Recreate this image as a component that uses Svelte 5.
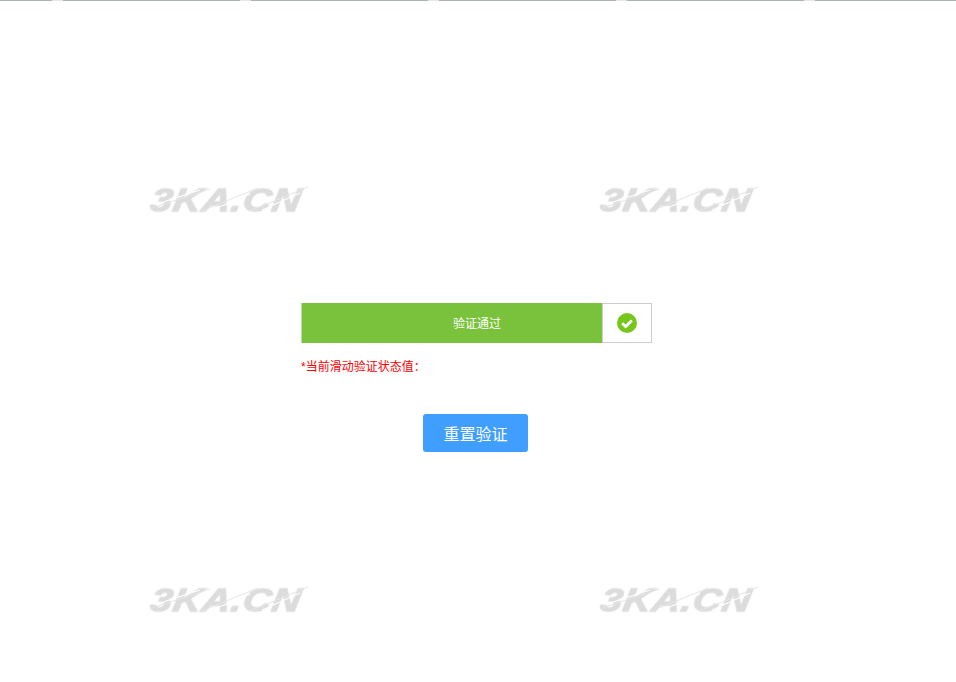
<script>
	const marks = [0, 1, 2, 3];
	const strips = [0, 1, 2, 3, 4, 5];
</script>

<div class="page">
	<div class="strip">
		{#each strips as s (s)}
			<span class="seg"></span>
		{/each}
	</div>

	<div class="marks" aria-hidden="true">
		{#each marks as m (m)}
			<div class="mark">
				<span class="mark-text">3KA.CN</span>
				<svg class="slashes" width="160" height="26" viewBox="0 0 160 26">
					<path d="M2 22 L60 3 M52 25 L108 2 M100 25 L158 1" fill="none" stroke="#e6e6e6" stroke-width="1" />
					<path d="M4 19 L50 4 M60 25 L100 8 M112 24 L150 7" fill="none" stroke="#fff" stroke-width="1.2" />
				</svg>
			</div>
		{/each}
	</div>

	<main class="content">
		<div class="slider">
			<div class="track">验证通过</div>
			<div class="handle">
				<svg width="20" height="20" viewBox="0 0 20 20">
					<circle cx="10" cy="10" r="10" fill="#76c61d" />
					<path d="M5.2 10.2 L8.7 13.6 L14.8 7.4" fill="none" stroke="#fff" stroke-width="2.8" />
				</svg>
			</div>
		</div>
		<p class="status">*当前滑动验证状态值：</p>
		<button class="reset">重置验证</button>
	</main>
</div>

<style>
	:global(body) {
		margin: 0;
		background: #fff;
	}

	.page {
		position: relative;
		height: 682px;
		overflow: hidden;
		font-family: "Liberation Sans", "Noto Sans CJK SC", sans-serif;
	}

	.strip {
		display: flex;
		gap: 11px;
		height: 1px;
		margin-left: -125px;
		background: #e6e6e6;
	}

	.seg {
		flex: none;
		width: 177px;
		background: #a9b3af;
	}

	.marks {
		position: absolute;
		left: 150px;
		top: 186px;
		display: grid;
		grid-template-columns: repeat(2, 450px);
		grid-auto-rows: 400px;
	}

	.mark {
		position: relative;
		width: 160px;
		height: 26px;
	}

	.mark-text {
		display: block;
		font-family: "Liberation Sans", sans-serif;
		font-size: 30px;
		line-height: 26px;
		font-weight: 700;
		font-style: italic;
		letter-spacing: 0.5px;
		color: #dcdcdc;
		-webkit-text-stroke: 1px #dcdcdc;
		filter: blur(0.6px);
		transform: translate(1px, 1px) scale(1.31, 1.1) skewX(-8deg);
		transform-origin: left center;
	}

	.slashes {
		position: absolute;
		left: 0;
		top: 0;
	}

	.content {
		position: relative;
		width: 351px;
		margin: 302px auto 0 301px;
		display: flex;
		flex-direction: column;
	}

	.slider {
		display: flex;
		height: 40px;
	}

	.track {
		flex: 1;
		border-left: 1px solid #bcdc9f;
		background: #7ac23c;
		color: #fff;
		font-size: 12px;
		line-height: 42px;
		text-align: center;
		padding-left: 49px;
	}

	.handle {
		flex: none;
		box-sizing: border-box;
		width: 50px;
		margin-left: -1px;
		border: 1px solid #ccc;
		background: #fff;
		display: flex;
		align-items: center;
		justify-content: center;
	}

	.status {
		margin: 16px 0 0;
		font-size: 12px;
		line-height: 16px;
		color: #f00;
	}

	.reset {
		align-self: flex-start;
		margin: 39px 0 0 122px;
		width: 105px;
		height: 38px;
		border: none;
		border-radius: 3px;
		background: #409eff;
		color: #fff;
		font-family: inherit;
		font-size: 16px;
		padding: 0;
	}
</style>
